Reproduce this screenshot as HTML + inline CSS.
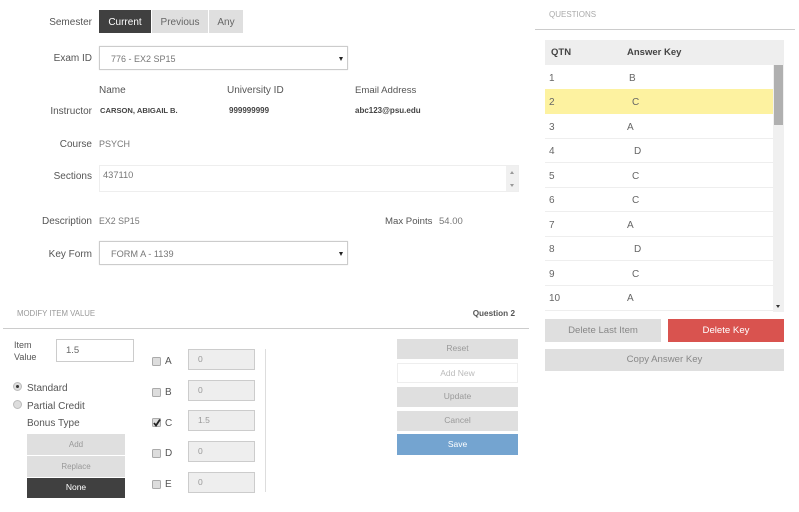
<!DOCTYPE html>
<html><head><meta charset="utf-8"><style>
html,body{margin:0;padding:0;background:#fff}
#p{position:relative;width:799px;height:512px;overflow:hidden;font-family:"Liberation Sans",sans-serif;font-size:10px;color:#555;background:#fff;filter:blur(.3px)}
#p div{position:absolute;box-sizing:border-box;white-space:nowrap}
.l{width:92px;left:0;text-align:right;height:14px;line-height:14px;color:#555}
.t{height:14px;line-height:14px}
.v{color:#777;font-size:9px}
.b{text-align:center;background:#dfdfdf;color:#999;font-size:8.5px}
.sel{border:1px solid #ccc;left:99px;width:249px;height:24px;line-height:24px;padding-left:11px;color:#777;box-shadow:0 0 1px #ddd;font-size:9.2px}
.sel i{position:absolute;right:4px;top:10px;border-left:2.5px solid transparent;border-right:2.5px solid transparent;border-top:4px solid #222}
.in{left:188px;width:67px;height:21px;background:#eee;border:1px solid #ccc;color:#999;font-size:8.5px;line-height:19px;padding-left:9px}
.cb{left:152px;width:9px;height:9px;background:#ddd;border:1px solid #aaa;border-radius:1.5px}
.r{left:545px;width:228px;height:25px;border-bottom:1px solid #eee;font-size:10px;color:#666;line-height:24px}
.r span{position:absolute;left:4px;top:2px}.r b{position:absolute;font-weight:normal;top:2px}
.m{font-size:9.6px}
</style></head><body><div id="p">
<div class="l" style="top:16px">Semester</div>
<div class="b" style="left:99px;top:10px;width:52px;height:23px;line-height:26px;background:#404040;color:#fff;font-size:10px">Current</div>
<div class="b" style="left:152px;top:10px;width:56px;height:23px;line-height:26px;color:#666;font-size:10px">Previous</div>
<div class="b" style="left:209px;top:10px;width:34px;height:23px;line-height:26px;color:#666;font-size:10px">Any</div>

<div class="l" style="top:52px">Exam ID</div>
<div class="sel" style="top:46px;font-size:9px">776 - EX2 SP15<i></i></div>

<div class="t" style="left:99px;top:84px">Name</div>
<div class="t" style="left:227px;top:84px">University ID</div>
<div class="t" style="left:355px;top:84px;font-size:9.6px">Email Address</div>
<div class="l" style="top:105px">Instructor</div>
<div class="t" style="left:100px;top:104px;font-size:7.6px;font-weight:bold;color:#444">CARSON, ABIGAIL B.</div>
<div class="t" style="left:229px;top:104px;font-size:8px;font-weight:bold;color:#444">999999999</div>
<div class="t" style="left:355px;top:104px;font-size:8px;font-weight:bold;color:#444">abc123@psu.edu</div>

<div class="l" style="top:138px">Course</div>
<div class="t v" style="left:99px;top:137px">PSYCH</div>
<div class="l" style="top:170px">Sections</div>
<div style="left:99px;top:165px;width:420px;height:27px;border:1px solid #eee"></div>
<div class="t v" style="left:103px;top:168px;font-size:9.3px">437110</div>
<div style="left:506px;top:166px;width:12px;height:25px;background:#f0f0f0"></div>
<div style="left:510px;top:171px;border-left:2.5px solid transparent;border-right:2.5px solid transparent;border-bottom:3px solid #999"></div>
<div style="left:510px;top:184px;border-left:2.5px solid transparent;border-right:2.5px solid transparent;border-top:3px solid #999"></div>

<div class="l" style="top:215px">Description</div>
<div class="t v" style="left:99px;top:214px;font-size:8.8px">EX2 SP15</div>
<div class="t" style="left:385px;top:215px;font-size:9.6px">Max Points</div>
<div class="t v" style="left:439px;top:215px;font-size:9.5px">54.00</div>
<div class="l" style="top:248px">Key Form</div>
<div class="sel" style="top:241px">FORM A - 1139<i></i></div>

<div class="t" style="left:17px;top:307px;font-size:7.8px;color:#999">MODIFY ITEM VALUE</div>
<div class="t" style="right:284px;top:307px;font-size:8.2px;font-weight:bold;color:#555">Question 2</div>
<div style="left:3px;top:328px;width:526px;height:1px;background:#ccc"></div>

<div style="left:14px;top:340px;font-size:9px;line-height:11.5px;white-space:normal;width:30px">Item<br>Value</div>
<div style="left:56px;top:339px;width:78px;height:23px;border:1px solid #ccc;line-height:22px;padding-left:9px;color:#666;font-size:9.5px">1.5</div>

<div style="left:13px;top:382px;width:9px;height:9px;border-radius:50%;background:#ddd;border:1px solid #bbb"></div>
<div style="left:16px;top:385px;width:3px;height:3px;border-radius:50%;background:#333"></div>
<div class="t" style="left:27px;top:382px">Standard</div>
<div style="left:13px;top:400px;width:9px;height:9px;border-radius:50%;background:#ddd;border:1px solid #bbb"></div>
<div class="t" style="left:27px;top:400px">Partial Credit</div>
<div class="t" style="left:27px;top:417px">Bonus Type</div>
<div class="b" style="left:27px;top:434px;width:98px;height:21px;line-height:21px;font-size:8px">Add</div>
<div class="b" style="left:27px;top:456px;width:98px;height:21px;line-height:21px;font-size:8px">Replace</div>
<div class="b" style="left:27px;top:478px;width:98px;height:20px;line-height:19px;background:#404040;color:#fff">None</div>

<div class="cb" style="top:357px"></div><div class="t" style="left:165px;top:355px">A</div><div class="in" style="top:349px">0</div>
<div class="cb" style="top:388px"></div><div class="t" style="left:165px;top:386px">B</div><div class="in" style="top:380px">0</div>
<div class="cb" style="top:418px"></div>
<svg style="position:absolute;left:152px;top:418px" width="10" height="10" viewBox="0 0 10 10"><path d="M2 5l2 2.5L8 1.5" fill="none" stroke="#222" stroke-width="1.8"/></svg>
<div class="t" style="left:165px;top:417px">C</div><div class="in" style="top:410px">1.5</div>
<div class="cb" style="top:449px"></div><div class="t" style="left:165px;top:447px">D</div><div class="in" style="top:441px">0</div>
<div class="cb" style="top:480px"></div><div class="t" style="left:165px;top:478px">E</div><div class="in" style="top:472px">0</div>
<div style="left:265px;top:349px;width:1px;height:143px;background:#ddd"></div>

<div class="b" style="left:397px;top:339px;width:121px;height:20px;line-height:18px">Reset</div>
<div class="b" style="left:397px;top:363px;width:121px;height:20px;line-height:19px;background:#fff;border:1px solid #eee;color:#bbb">Add New</div>
<div class="b" style="left:397px;top:387px;width:121px;height:20px;line-height:18px">Update</div>
<div class="b" style="left:397px;top:411px;width:121px;height:20px;line-height:18px">Cancel</div>
<div class="b" style="left:397px;top:434px;width:121px;height:21px;line-height:21px;background:#74a4d0;color:#fff">Save</div>

<div class="t" style="left:549px;top:8px;font-size:8px;color:#aaa">QUESTIONS</div>
<div style="left:535px;top:29px;width:260px;height:1px;background:#ccc"></div>
<div style="left:545px;top:40px;width:239px;height:25px;background:#eee;line-height:26px;font-weight:bold;color:#444;font-size:9.5px"><span style="position:absolute;left:6px">QTN</span><span style="position:absolute;left:82px">Answer Key</span></div>

<div class="r" style="top:65px"><span>1</span><b style="left:84px">B</b></div>
<div class="r" style="top:89px;background:#fdf2a0;border:0"><span>2</span><b style="left:87px">C</b></div>
<div class="r" style="top:114px"><span>3</span><b style="left:82px">A</b></div>
<div class="r" style="top:138px"><span>4</span><b style="left:89px">D</b></div>
<div class="r" style="top:163px"><span>5</span><b style="left:87px">C</b></div>
<div class="r" style="top:187px"><span>6</span><b style="left:87px">C</b></div>
<div class="r" style="top:212px"><span>7</span><b style="left:82px">A</b></div>
<div class="r" style="top:236px"><span>8</span><b style="left:89px">D</b></div>
<div class="r" style="top:261px"><span>9</span><b style="left:87px">C</b></div>
<div class="r" style="top:285px;height:26px"><span>10</span><b style="left:82px">A</b></div>

<div style="left:773px;top:65px;width:11px;height:247px;background:#f0f0f0"></div>
<div style="left:774px;top:65px;width:9px;height:60px;background:#b0b0b0"></div>
<div style="left:776px;top:305px;border-left:2.5px solid transparent;border-right:2.5px solid transparent;border-top:3px solid #333"></div>

<div class="b m" style="left:545px;top:319px;width:116px;height:23px;line-height:24px;color:#888">Delete Last Item</div>
<div class="b m" style="left:668px;top:319px;width:116px;height:23px;line-height:24px;background:#d9534f;color:#fff">Delete Key</div>
<div class="b m" style="left:545px;top:349px;width:239px;height:22px;line-height:22px;color:#888">Copy Answer Key</div>
</div></body></html>
